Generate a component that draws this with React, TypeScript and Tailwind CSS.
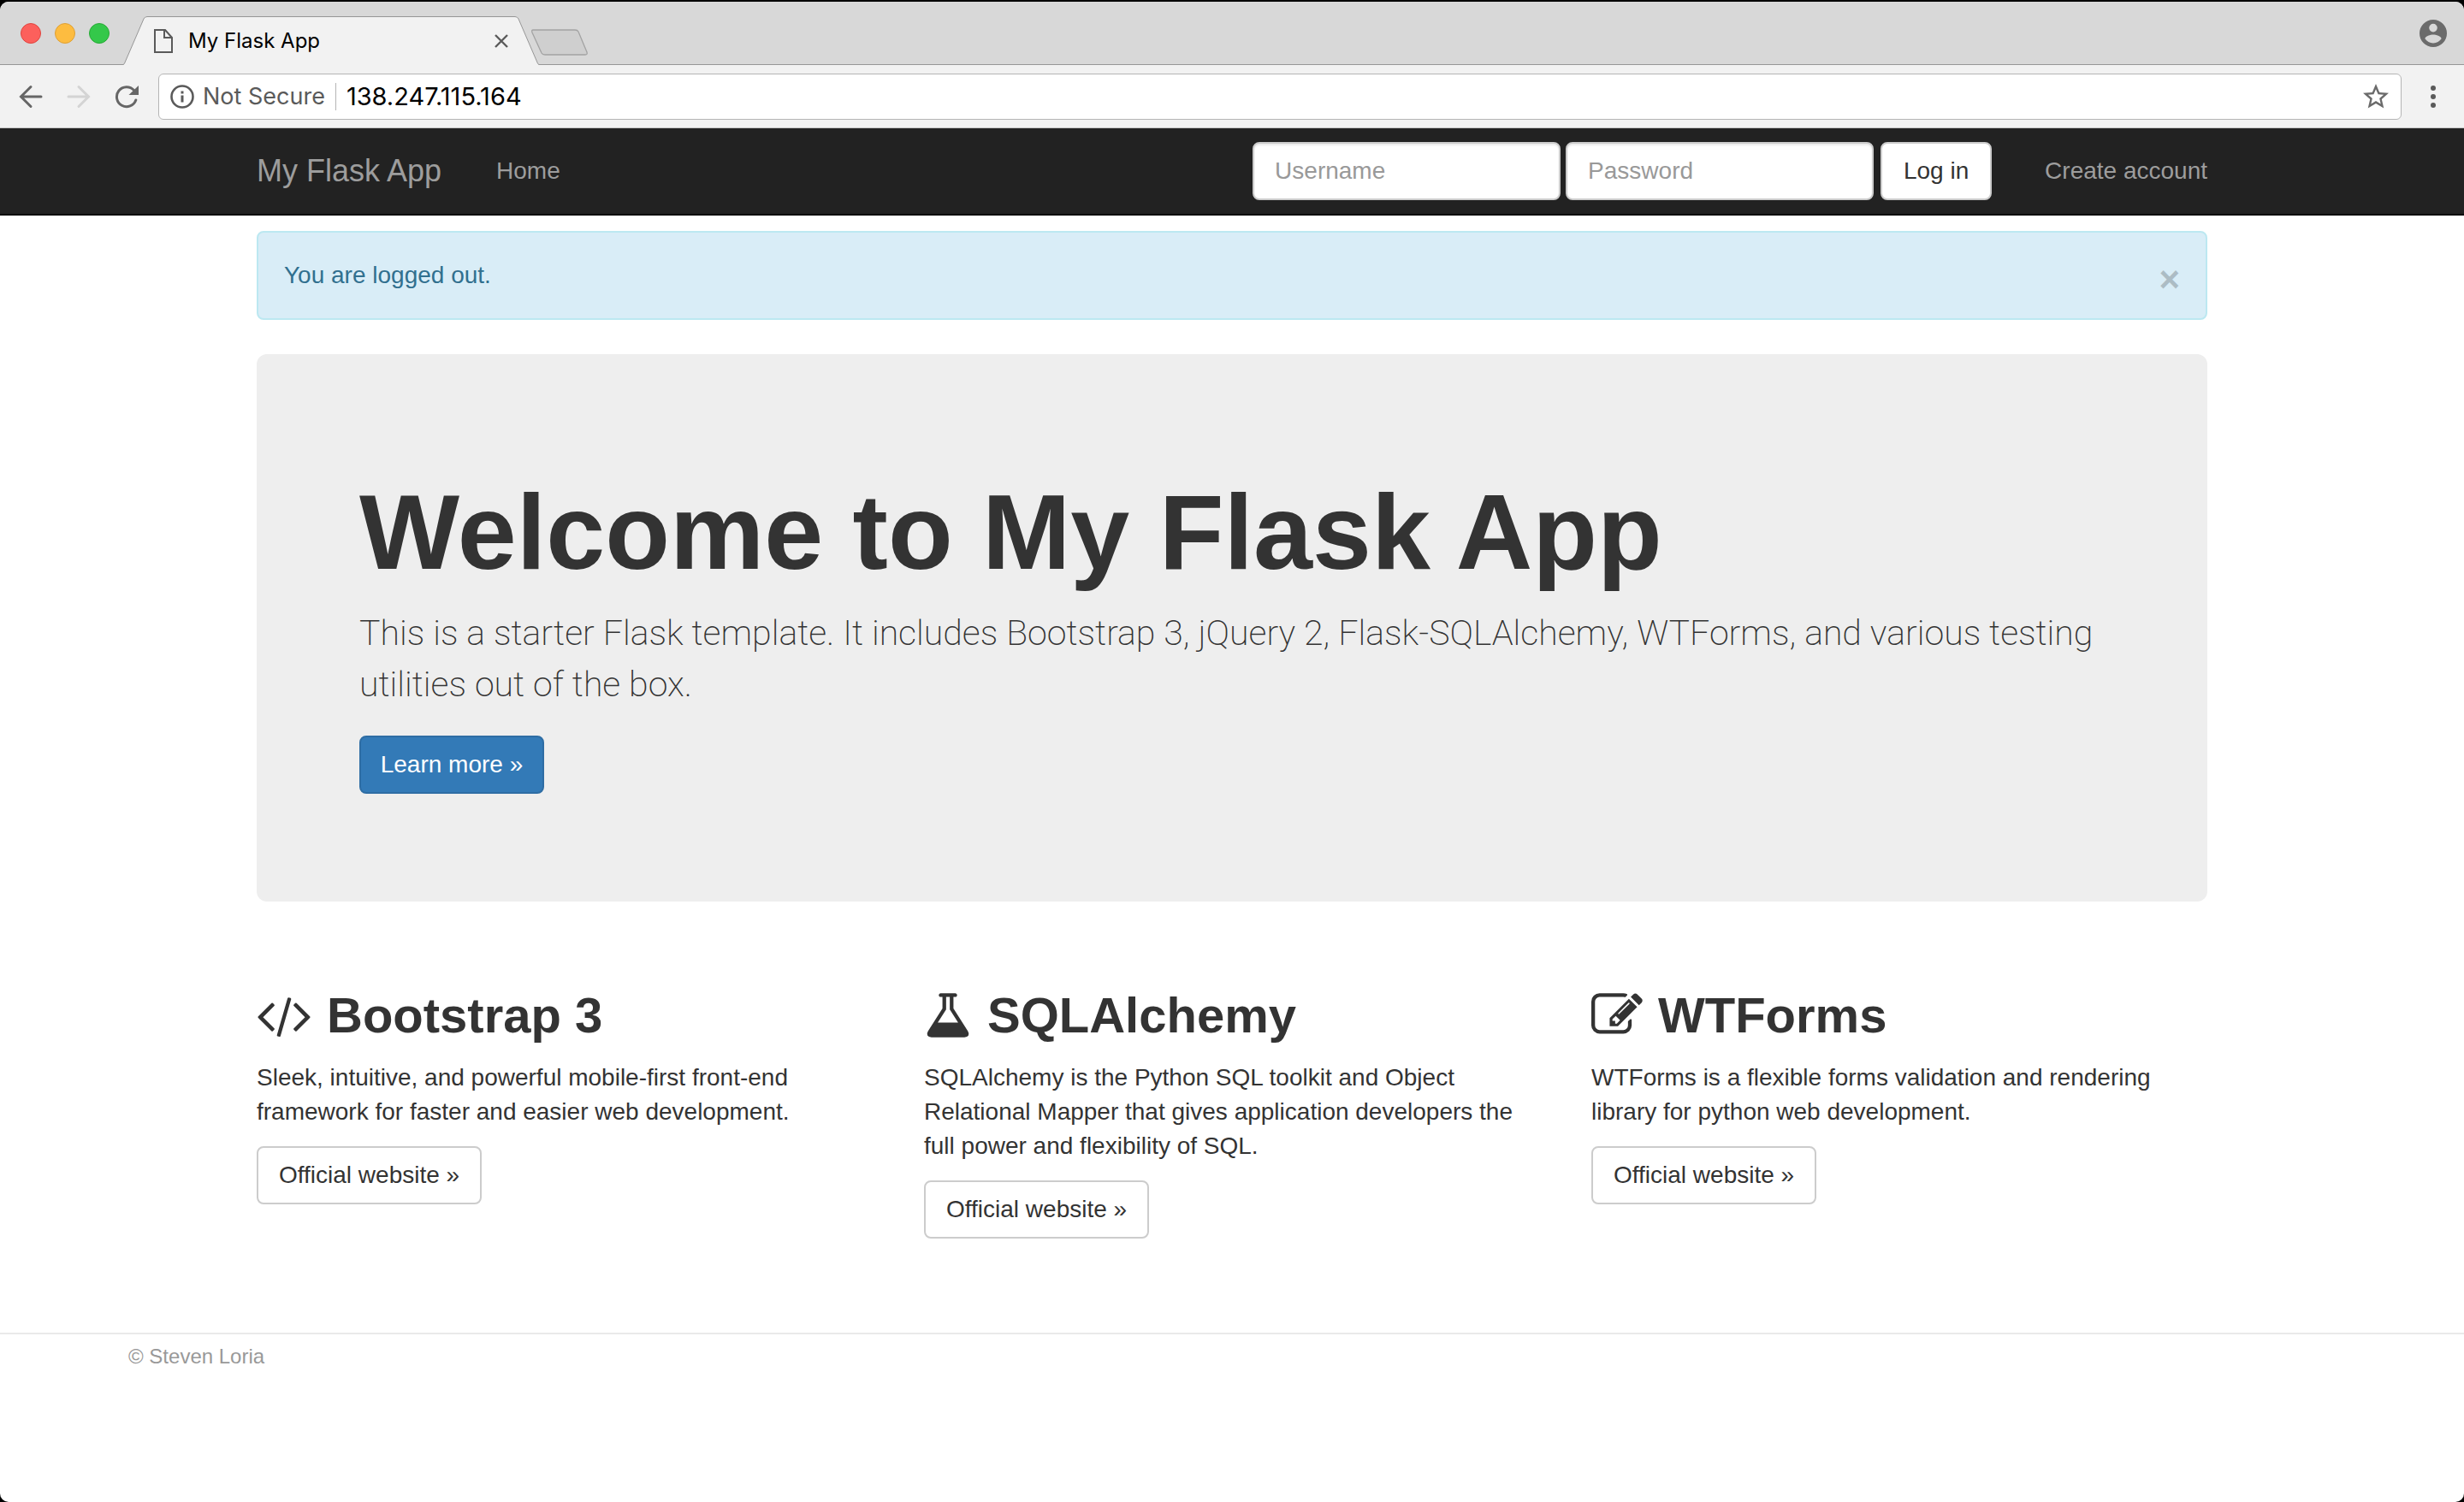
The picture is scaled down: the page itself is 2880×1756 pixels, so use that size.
import React, { useState } from "react";

const iconPaths = {
  code: {
    box: "0 0 1920 1792",
    width: 64,
    d: "M617 1399l-50 50q-10 10-23 10t-23-10l-466-466q-10-10-10-23t10-23l466-466q10-10 23-10t23 10l50 50q10 10 10 23t-10 23l-393 393 393 393q10 10 10 23t-10 23zm591-1067l-373 1291q-4 13-15.5 19.5t-23.5 2.5l-62-17q-13-4-19.5-15.5t-2.5-24.5l373-1291q4-13 15.5-19.5t23.5-2.5l62 17q13 4 19.5 15.5t2.5 24.5zm657 651l-466 466q-10 10-23 10t-23-10l-50-50q-10-10-10-23t10-23l393-393-393-393q-10-10-10-23t10-23l50-50q10-10 23-10t23 10l466 466q10 10 10 23t-10 23z",
  },
  flask: {
    box: "64 0 1664 1792",
    width: 56,
    d: "M1591 1448q56 89 21.5 152.5t-140.5 63.5h-1152q-106 0-140.5-63.5t21.5-152.5l503-793v-399h-64q-26 0-45-19t-19-45 19-45 45-19h512q26 0 45 19t19 45-19 45-45 19h-64v399zm-779-725l-272 429h712l-272-429-20-31v-436h-128v436z",
  },
  edit: {
    box: "0 0 1792 1792",
    width: 60,
    d: "M888 1184l116-116-152-152-116 116v56h96v96h56zm440-720q-16-16-33 1l-350 350q-17 17-1 33t33-1l350-350q17-17 1-33zm80 594v190q0 119-84.5 203.5t-203.5 84.5h-832q-119 0-203.5-84.5t-84.5-203.5v-832q0-119 84.5-203.5t203.5-84.5h832q63 0 117 25 15 7 18 23 3 17-9 29l-49 49q-14 14-32 8-23-6-45-6h-832q-66 0-113 47t-47 113v832q0 66 47 113t113 47h832q66 0 113-47t47-113v-126q0-13 9-22l64-64q15-15 35-7t20 29zm-96-738l288 288-672 672h-288v-288zm444 132l-92 92-288-288 92-92q28-28 68-28t68 28l152 152q28 28 28 68t-28 68z",
  },
};

type IconName = keyof typeof iconPaths;

function GlyphIcon({ name }: { name: IconName }) {
  const icon = iconPaths[name];
  return (
    <svg viewBox={icon.box} width={icon.width} height={60} fill="currentColor" className="shrink-0" aria-hidden="true">
      <path d={icon.d} />
    </svg>
  );
}

const features: { icon: IconName; title: string; text: string }[] = [
  {
    icon: "code",
    title: "Bootstrap 3",
    text: "Sleek, intuitive, and powerful mobile-first front-end framework for faster and easier web development.",
  },
  {
    icon: "flask",
    title: "SQLAlchemy",
    text: "SQLAlchemy is the Python SQL toolkit and Object Relational Mapper that gives application developers the full power and flexibility of SQL.",
  },
  {
    icon: "edit",
    title: "WTForms",
    text: "WTForms is a flexible forms validation and rendering library for python web development.",
  },
];

function TabStrip() {
  return (
    <div className="flex h-[74px] items-end border-b border-[#969696] bg-[#d8d8d8]">
      <div className="flex gap-4 self-center pl-6">
        <button aria-label="Close window" className="size-6 rounded-full border border-[#e0443e] bg-[#fc605c]" />
        <button aria-label="Minimize window" className="size-6 rounded-full border border-[#dea034] bg-[#fdbc40]" />
        <button aria-label="Zoom window" className="size-6 rounded-full border border-[#27aa35] bg-[#34c84a]" />
      </div>
      <div className="-mb-px ml-4 flex h-[57px]">
        <svg width="28" height="57" viewBox="0 0 28 57" aria-hidden="true">
          <path d="M0 57 L2 54 L24 3 Q25 0 28 0 V57 Z" fill="#f2f2f2" />
          <path d="M0 56.5 Q1.5 56 2 54 L24 3 Q25 .5 28 .5" fill="none" stroke="#969696" />
        </svg>
        <div className="flex w-[430px] items-center border-t border-[#969696] bg-[#f2f2f2] px-2">
          <svg width="22" height="28" viewBox="0 0 22 28" fill="none" stroke="#5a5a5a" strokeWidth="2" aria-hidden="true">
            <path d="M1 1H13L21 10V27H1Z" />
            <path d="M12 1V10H21" />
          </svg>
          <span className="ml-[18px] grow font-[Inter] text-[24px] leading-[32px] text-black">My Flask App</span>
          <button aria-label="Close tab">
            <svg width="16" height="16" viewBox="0 0 16 16" stroke="#5a5a5a" strokeWidth="2.4" aria-hidden="true">
              <path d="M1 1L15 15M15 1L1 15" />
            </svg>
          </button>
        </div>
        <svg width="28" height="57" viewBox="0 0 28 57" aria-hidden="true">
          <path d="M28 57 L26 54 L4 3 Q3 0 0 0 V57 Z" fill="#f2f2f2" />
          <path d="M28 56.5 Q26.5 56 26 54 L4 3 Q3 .5 0 .5" fill="none" stroke="#969696" />
        </svg>
      </div>
      <button aria-label="New tab" className="mb-2 -ml-[10px]">
        <svg width="68" height="34" viewBox="0 0 68 34" aria-hidden="true">
          <path d="M3 2H52Q55 2 56 4L66 28Q67 31 64 31H17Q14 31 13 29L2 5Q1 2 3 2Z" fill="#cfcfcf" stroke="#a3a3a3" strokeWidth="1.3" />
        </svg>
      </button>
      <button aria-label="Profile" className="mr-5 ml-auto self-center">
        <svg width="32" height="32" viewBox="2 2 20 20" fill="#6b6b6b" aria-hidden="true">
          <path
            fillRule="evenodd"
            d="M12 2a10 10 0 1 0 0 20a10 10 0 0 0 0-20ZM12 5a3 3 0 1 1 0 6a3 3 0 0 1 0-6ZM12 19.2c-2.5 0-4.700-1.280-6-3.220c.030-1.990 4-3.080 6-3.080s5.970 1.090 6 3.080c-1.290 1.940-3.500 3.220-6 3.220Z"
          />
        </svg>
      </button>
    </div>
  );
}

function Toolbar() {
  return (
    <div className="flex h-[74px] items-center border-b border-[#c4c4c4] bg-[#f2f2f2]">
      <div className="flex w-[185px] shrink-0 items-center gap-7 pl-[22px]">
        <button aria-label="Back">
          <svg width="28" height="28" viewBox="0 0 28 28" fill="none" stroke="#666" strokeWidth="3" strokeLinecap="round" aria-hidden="true">
            <path d="M26 14H3M14 2.500L2.500 14L14 25.500" />
          </svg>
        </button>
        <button aria-label="Forward">
          <svg width="28" height="28" viewBox="0 0 28 28" fill="none" stroke="#d4d4d4" strokeWidth="3" strokeLinecap="round" aria-hidden="true">
            <path d="M2 14H25M14 2.500L25.500 14L14 25.500" />
          </svg>
        </button>
        <button aria-label="Reload">
          <svg width="28" height="28" viewBox="0 0 28 28" aria-hidden="true">
            <path d="M22.500 6.500A11.500 11.500 0 1 0 24.800 18" fill="none" stroke="#666" strokeWidth="3" strokeLinecap="round" />
            <path d="M28 1V12H16.500Z" fill="#666" />
          </svg>
        </button>
      </div>
      <div className="flex h-[54px] grow items-center rounded-md border border-[#b5b5b5] bg-white pr-[14px] pl-[13px] font-[Inter] leading-[36px]">
        <svg width="28" height="28" viewBox="0 0 28 28" aria-hidden="true">
          <circle cx="14" cy="14" r="12.500" fill="none" stroke="#5a5a5a" strokeWidth="2.600" />
          <path d="M12.500 7.500h3v3h-3zM12.500 12.500h3v8h-3z" fill="#5a5a5a" />
        </svg>
        <span className="ml-[10px] text-[27px] text-[#5a5a5a]">Not Secure</span>
        <span className="mx-3 h-8 w-px bg-[#b5b5b5]" />
        <input aria-label="Address" defaultValue="138.247.115.164" className="min-w-0 grow bg-transparent text-[29px] text-black outline-none" />
        <button aria-label="Bookmark this page">
          <svg width="30" height="30" viewBox="2 2 20 20" fill="#6b6b6b" aria-hidden="true">
            <path d="M22 9.240l-7.190-.62L12 2 9.190 8.630 2 9.240l5.460 4.730L5.820 21 12 17.270 18.180 21l-1.630-7.030L22 9.240zM12 15.400l-3.760 2.270 1-4.280-3.320-2.880 4.380-.38L12 6.100l1.710 4.040 4.380.38-3.320 2.880 1 4.280L12 15.400z" />
          </svg>
        </button>
      </div>
      <button aria-label="Menu" className="flex w-[73px] shrink-0 flex-col items-center gap-1">
        <span className="size-[6px] rounded-full bg-[#5a5a5a]" />
        <span className="size-[6px] rounded-full bg-[#5a5a5a]" />
        <span className="size-[6px] rounded-full bg-[#5a5a5a]" />
      </button>
    </div>
  );
}

function Navbar() {
  const field =
    "h-[68px] w-[360px] rounded-lg border-2 border-[#ccc] bg-white px-6 text-[28px] text-[#555] shadow-[inset_0_2px_2px_rgba(0,0,0,0.075)] outline-none placeholder:text-[#999]";
  return (
    <nav className="border-b-2 border-[#080808] bg-[#222]">
      <div className="mx-auto flex h-[100px] max-w-[2340px] items-center px-[30px] text-[#9d9d9d]">
        <a href="#" className="text-[36px] leading-[40px]">
          My Flask App
        </a>
        <a href="#" className="ml-16">
          Home
        </a>
        <form className="ml-auto flex items-center" onSubmit={(e) => e.preventDefault()}>
          <input aria-label="Username" placeholder="Username" className={field} />
          <input aria-label="Password" type="password" placeholder="Password" className={field + " ml-[6px]"} />
          <button type="submit" className="ml-2 h-[68px] w-[130px] rounded-lg border-2 border-[#ccc] bg-white text-[#333]">
            Log in
          </button>
        </form>
        <a href="#" className="ml-[62px]">
          Create account
        </a>
      </div>
    </nav>
  );
}

export default function App() {
  const [alertOpen, setAlertOpen] = useState(true);
  return (
    <div className="flex min-h-screen flex-col bg-black pt-[2px] font-['Liberation_Sans',Arial,sans-serif] text-[28px] leading-[40px] text-[#333]">
      <div className="flex grow flex-col overflow-hidden rounded-[10px] bg-white">
        <header>
          <TabStrip />
          <Toolbar />
        </header>
        <Navbar />
        <main className="mx-auto w-full max-w-[2340px] px-[30px] pt-[18px]">
          {alertOpen && (
            <div role="alert" className="mb-10 flex items-center justify-between rounded-lg border-2 border-[#bce8f1] bg-[#d9edf7] p-[30px] text-[#31708f]">
              <span>You are logged out.</span>
              <button
                aria-label="Close alert"
                onClick={() => setAlertOpen(false)}
                className="h-10 text-[42px] leading-[50px] font-bold text-black opacity-20"
              >
                ×
              </button>
            </div>
          )}
          <section className="rounded-xl bg-[#eee] px-[120px] pt-[138px] pb-[126px]">
            <h1 className="text-[124px] leading-[140px] font-bold">Welcome to My Flask App</h1>
            <p className="mt-[18px] font-[Roboto] text-[41px] leading-[60px] font-extralight">
              This is a starter Flask template. It includes Bootstrap 3, jQuery 2, Flask-SQLAlchemy, WTForms, and various
              testing utilities out of the box.
            </p>
            <a
              href="#"
              className="mt-[30px] inline-block w-[216px] rounded-lg border-2 border-[#2e6da4] bg-[#337ab7] py-3 text-center text-white"
            >
              Learn more »
            </a>
          </section>
          <section className="mt-[100px] grid grid-cols-3 gap-[60px]">
            {features.map((f) => (
              <article key={f.title}>
                <h2 className="flex items-center gap-[18px] text-[58px] leading-[66px] font-bold">
                  <GlyphIcon name={f.icon} />
                  {f.title}
                </h2>
                <p className="mt-5">{f.text}</p>
                <a href="#" className="mt-5 inline-block rounded-lg border-2 border-[#ccc] bg-white px-6 py-3">
                  Official website »
                </a>
              </article>
            ))}
          </section>
        </main>
        <footer className="mt-[110px] border-t-2 border-[#eaeaea] px-[150px] pt-[6px] text-[24px] text-[#999]">
          © Steven Loria
        </footer>
      </div>
    </div>
  );
}
